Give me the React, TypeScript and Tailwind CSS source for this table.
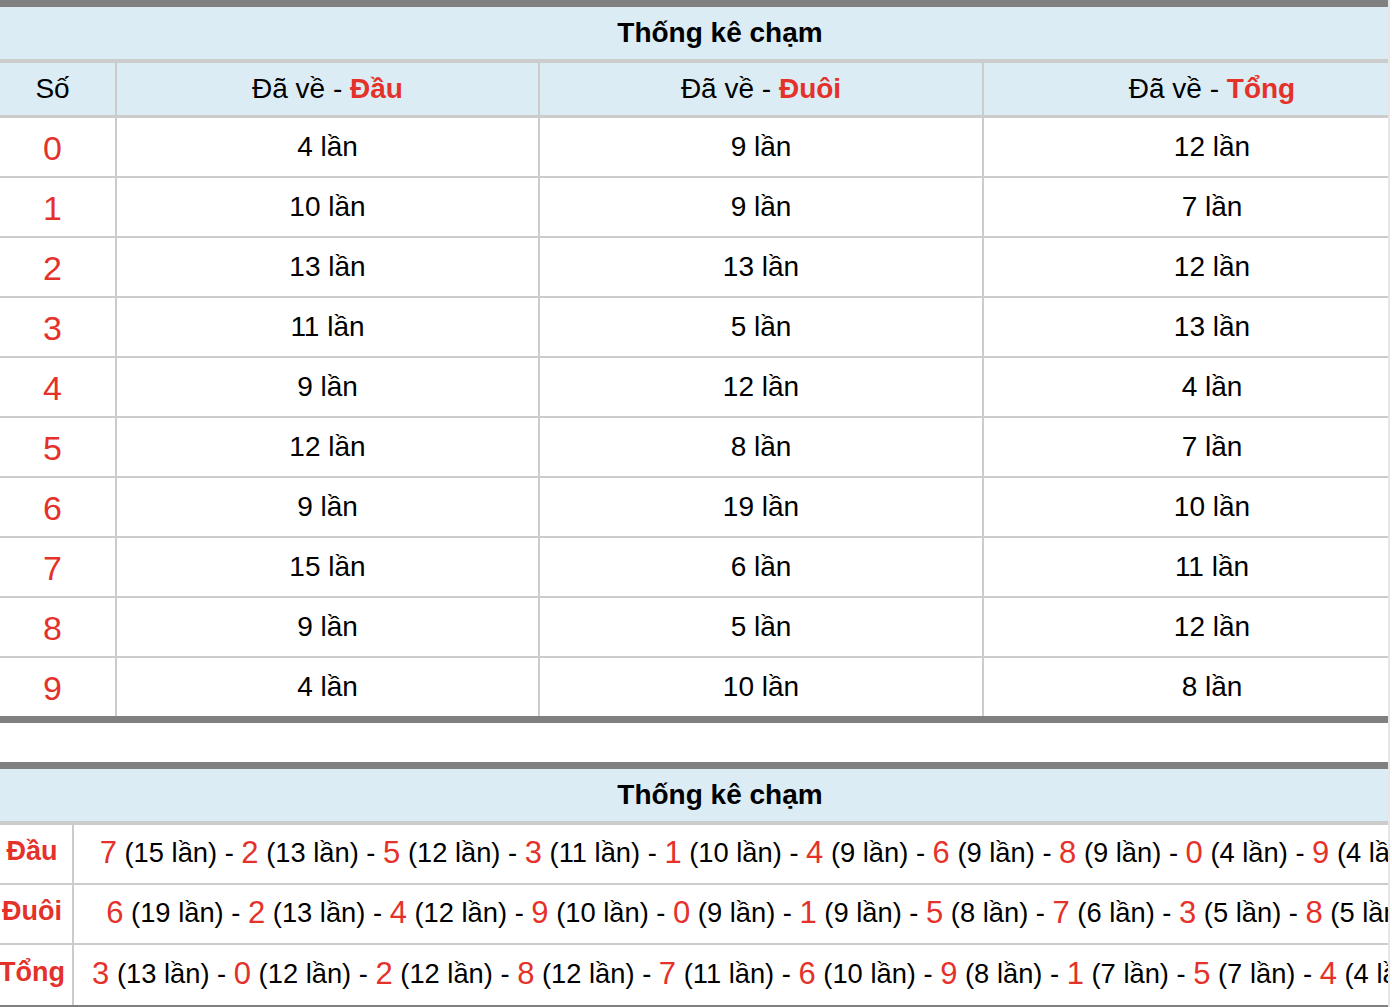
import React from "react";

const DAU = [4, 10, 13, 11, 9, 12, 9, 15, 9, 4];
const DUOI = [9, 9, 13, 5, 12, 8, 19, 6, 5, 10];
const TONG = [12, 7, 12, 13, 4, 7, 10, 11, 12, 8];

const FONT = { fontFamily: '"Liberation Sans", Arial, sans-serif' };

// digits ordered by count, highest first (stable for ties)
const ranked = (counts: number[]) =>
  counts
    .map((c, d) => ({ d, c }))
    .sort((a, b) => b.c - a.c);

const GRID = "grid grid-cols-[117px_423px_444px_456px]";

const Title = () => (
  <div className="flex h-[56px] items-center justify-center border-b-[4px] border-[#cccccc] bg-[#dcecf5] text-[28px] font-bold text-black">
    Thống kê chạm
  </div>
);

const HeadCell = ({ label, last }: { label: string; last?: boolean }) => (
  <div
    className={`flex items-center justify-center whitespace-pre ${last ? "" : "border-r-2 border-[#cccccc]"}`}
  >
    {"Đã về - "}
    <span className="font-bold text-[#e4322b]">{label}</span>
  </div>
);

const ChamTable = () => (
  <div className="border-y-[7px] border-[#808080]">
    <Title />
    <div className={`${GRID} h-[55px] border-b-[3px] border-[#cccccc] bg-[#dcecf5] text-[28px] text-black`}>
      <div className="flex items-center justify-center border-r-2 border-[#cccccc] pr-[10px]">Số</div>
      <HeadCell label="Đầu" />
      <HeadCell label="Đuôi" />
      <HeadCell label="Tổng" last />
    </div>
    {DAU.map((_, i) => (
      <div
        key={i}
        className={`${GRID} ${i < 9 ? "h-[60px] border-b-2 border-[#cccccc]" : "h-[58px]"} text-[28px] text-black`}
      >
        <div className="flex items-center justify-center border-r-2 border-[#cccccc] pr-[10px] pt-[2px] text-[34px] text-[#e4322b]">
          {i}
        </div>
        <div className="flex items-center justify-center border-r-2 border-[#cccccc] pb-[1px]">{DAU[i]} lần</div>
        <div className="flex items-center justify-center border-r-2 border-[#cccccc] pb-[1px]">{DUOI[i]} lần</div>
        <div className="flex items-center justify-center pb-[1px]">{TONG[i]} lần</div>
      </div>
    ))}
  </div>
);

const RankRow = ({ label, counts, last }: { label: string; counts: number[]; last?: boolean }) => (
  <div
    className={`grid h-[60px] grid-cols-[74px_1fr] ${last ? "" : "border-b-2 border-[#cccccc]"}`}
  >
    <div className="flex items-center justify-center overflow-visible whitespace-nowrap border-r-2 border-[#cccccc] pr-[8px] pb-[6px] text-[27px] font-bold text-[#e4322b]">
      {label}
    </div>
    <div className="flex items-center justify-center overflow-hidden whitespace-nowrap pb-[1px] text-[27.3px] text-black">
      {ranked(counts).map((r, k) => (
        <React.Fragment key={r.d}>
          {k > 0 && <span>&nbsp;-&nbsp;</span>}
          <span className="text-[31px] text-[#e4322b]">{r.d}</span>
          <span>&nbsp;({r.c} lần)</span>
        </React.Fragment>
      ))}
    </div>
  </div>
);

const RankTable = () => (
  <div className="border-y-[7px] border-[#808080]">
    <Title />
    <RankRow label="Đầu" counts={DAU} />
    <RankRow label="Đuôi" counts={DUOI} />
    <RankRow label="Tổng" counts={TONG} last />
  </div>
);

export default function App() {
  return (
    <div className="flex h-[1007px] w-[1392px] overflow-hidden bg-white" style={FONT}>
      <div className="w-[1388px] shrink-0 overflow-hidden">
        <div className="flex w-[1440px] flex-col gap-[39px]">
          <ChamTable />
          <RankTable />
        </div>
      </div>
      <div className="w-[2px] shrink-0 bg-[#e6e6e6]" />
    </div>
  );
}
